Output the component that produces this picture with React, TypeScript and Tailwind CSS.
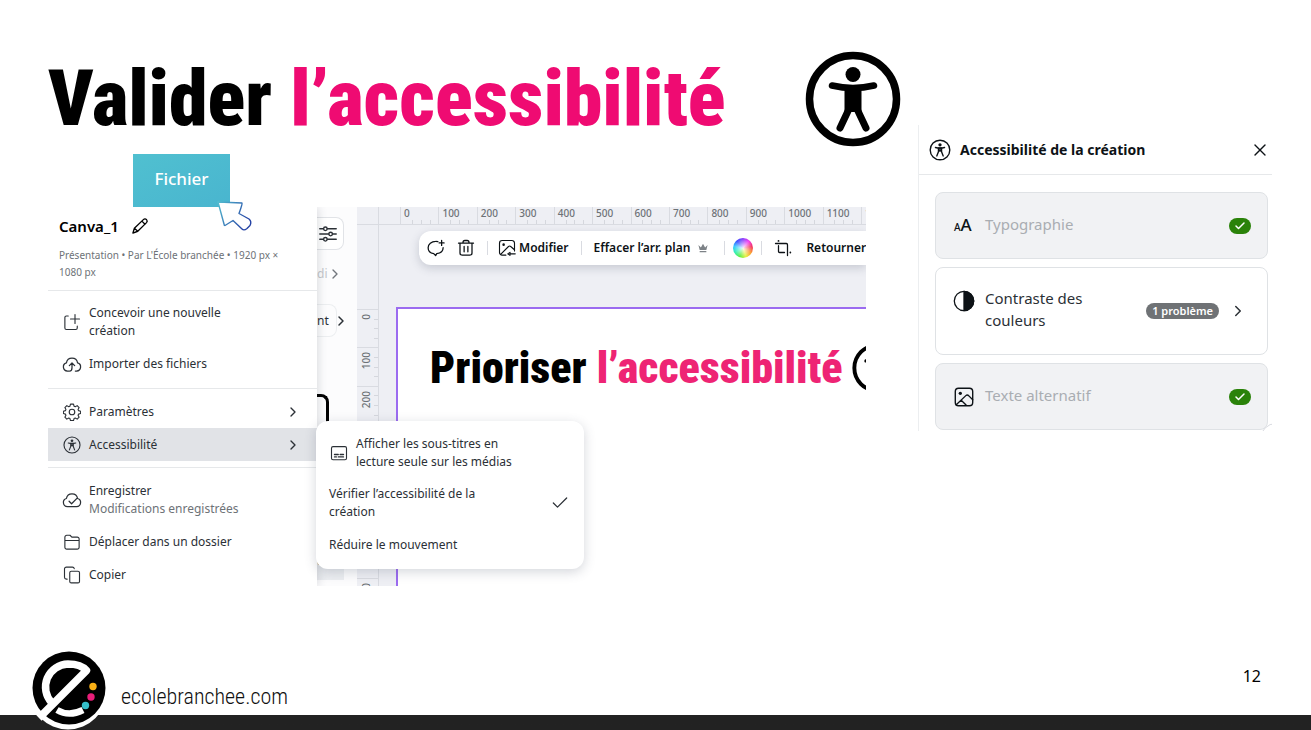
import React from 'react';
import type { ReactNode } from 'react';
import { Check, ChevronRight, X } from 'lucide-react';

interface IconProps {
  className?: string;
}

interface LineIconProps extends IconProps {
  children: ReactNode;
  strokeWidth?: number;
}

function LineIcon({ children, className = 'w-[18px] h-[18px]', strokeWidth = 1.5 }: LineIconProps) {
  return (
    <svg
      viewBox="0 0 24 24"
      className={`shrink-0 ${className}`}
      fill="none"
      stroke="currentColor"
      strokeWidth={strokeWidth}
      strokeLinecap="round"
      strokeLinejoin="round"
      aria-hidden="true"
    >
      {children}
    </svg>
  );
}

function PersonLogo({ className }: IconProps) {
  return (
    <svg viewBox="0 0 96 96" className={className} fill="none" stroke="#000" strokeLinecap="round" strokeLinejoin="round" aria-hidden="true">
      <circle cx="48" cy="48" r="43.5" strokeWidth="7.5" />
      <circle cx="48" cy="23.5" r="7.5" fill="#000" stroke="none" />
      <path d="M27 34.500q21 5 42 0" strokeWidth="6.500" />
      <path d="M39.500 36h17v25h-17z" fill="#000" stroke="none" />
      <path d="M43.500 59L35 77M52.500 59L61 77" strokeWidth="7" />
    </svg>
  );
}

function PersonIcon({ className }: IconProps) {
  return (
    <LineIcon className={className}>
      <circle cx="12" cy="12" r="10.700" strokeWidth="1.500" />
      <circle cx="12" cy="6.300" r="1.800" fill="currentColor" stroke="none" />
      <path d="M7 9.300q5 1.300 10 0" />
      <path d="M10.300 9.800h3.400v4l1.800 4.700M10.300 9.800v4l-1.800 4.700M10.500 13.500l1.500-.8 1.500.8M12 10v3" />
    </LineIcon>
  );
}

function PencilIcon() {
  return (
    <LineIcon className="w-4.5 h-4.5" strokeWidth={1.8}>
      <path d="M2.500 21.500l2-6.500L16.500 3.500c1.300-1.300 3-1.300 4.200 0s1.200 2.700 0 4L9 19zM14.500 5.500l4.200 4.200M4.500 15L9 19" />
    </LineIcon>
  );
}

function NewDesignIcon() {
  return (
    <LineIcon>
      <path d="M7 4H4.500A2 2 0 0 0 2.500 6v14a2 2 0 0 0 2 2H17a2 2 0 0 0 2-2V17.500M16 2v12M10 8h12" />
    </LineIcon>
  );
}

function CloudUploadIcon() {
  return (
    <LineIcon className="w-5 h-5">
      <path d="M8 20.500H6.500a5 5 0 0 1-1.200-9.800 6.800 6.800 0 0 1 13.400 0 5 5 0 0 1-1.200 9.800H16" />
      <path d="M9 20.500q3 0 3-4V11M8.800 14l3.200-3.200 3.200 3.200" />
    </LineIcon>
  );
}

function GearIcon() {
  return (
    <LineIcon>
      <circle cx="12" cy="12" r="3.700" />
      <path d="M10 1.500h4l.8 2.800 1.500.6 2.600-1.400 2.600 2.600-1.400 2.600.6 1.500 2.800.8v3l-2.800.8-.6 1.500 1.400 2.600-2.600 2.600-2.600-1.400-1.500.6-.8 2.800h-4l-.8-2.800-1.500-.6-2.600 1.400-2.600-2.600 1.400-2.600-.6-1.500-2.800-.8v-3l2.800-.8.6-1.500-1.400-2.600 2.600-2.600 2.600 1.400 1.500-.6z" />
    </LineIcon>
  );
}

function CloudCheckIcon() {
  return (
    <LineIcon className="w-5 h-5">
      <path d="M10 20H6.500a5 5 0 0 1-1.200-9.800 6.800 6.800 0 0 1 13.400 0A5 5 0 0 1 17.500 20H10M8.500 13.500l3 3 7-7" />
    </LineIcon>
  );
}

function FolderIcon() {
  return (
    <LineIcon>
      <path d="M2.500 10V5.500A2.500 2.500 0 0 1 5 3h4.300l2.500 2.500H19A2.500 2.500 0 0 1 21.500 8v11a2.500 2.500 0 0 1-2.500 2.500H5A2.500 2.500 0 0 1 2.500 19v-9h19" />
    </LineIcon>
  );
}

function CopyIcon() {
  return (
    <LineIcon>
      <rect x="9" y="7" width="13" height="15.500" rx="2" />
      <path d="M5.500 17.500H4.500A2.500 2.500 0 0 1 2 15V4A2.500 2.500 0 0 1 4.500 1.500h8A2.500 2.500 0 0 1 15 3.500" />
    </LineIcon>
  );
}

function SubtitleIcon() {
  return (
    <LineIcon>
      <rect x="2" y="3.500" width="20" height="17.500" rx="2" />
      <path d="M6 14h5M13.500 14H18M6 17.200h2.500M11 17.200h7" strokeWidth="1.800" />
    </LineIcon>
  );
}

function ImageIcon({ className }: IconProps) {
  return (
    <LineIcon className={className}>
      <rect x="2.500" y="2.500" width="19" height="19" rx="3.500" />
      <circle cx="8" cy="8" r="1.800" fill="currentColor" stroke="none" />
      <path d="M3.500 20.500L14 10.500q1.500-1.400 3 0l4.500 4.500M9 15.500l5.500 5.500" />
    </LineIcon>
  );
}

function EditImageIcon() {
  return (
    <LineIcon>
      <path d="M10.500 21.500H5.500a3.500 3.500 0 0 1-3.500-3.500V5.500A3.500 3.500 0 0 1 5.500 2h13A3.500 3.500 0 0 1 22 5.500V16M3.500 20.500L14 10q1.500-1.400 3 0l4.500 4" />
      <circle cx="7.500" cy="7.500" r="1.700" fill="currentColor" stroke="none" />
      <path d="M13 19.800l3-2v4zM16 19.800h7" />
    </LineIcon>
  );
}

function SlidersIcon() {
  return (
    <LineIcon className="w-4.5 h-4.5" strokeWidth={1.8}>
      <path d="M1 5h5M11 5h12M1 12h12M18 12h5M1 19h5M11 19h12" />
      <circle cx="8.500" cy="5" r="2.400" />
      <circle cx="15.500" cy="12" r="2.400" />
      <circle cx="8.500" cy="19" r="2.400" />
    </LineIcon>
  );
}

function CommentIcon() {
  return (
    <LineIcon strokeWidth={1.7}>
      <path d="M14.500 3.500a12 12 0 0 0-3-.3C6 3.200 1.500 6.800 1.500 11.500c0 4 3 7.200 7.500 8l2.500 2.700 1.500-2.700c5-.7 8.500-3.800 8.500-8M19.500 2v6.500M16.200 5.200h6.600" />
    </LineIcon>
  );
}

function TrashIcon() {
  return (
    <LineIcon strokeWidth={1.7}>
      <path d="M2 5.500h20M8 5.500V4.500a2.500 2.500 0 0 1 2.500-2.500h3A2.500 2.500 0 0 1 16 4.500v1M4 5.500v13A3 3 0 0 0 7 21.500h10a3 3 0 0 0 3-3v-13M9.500 10v7M14.500 10v7" />
    </LineIcon>
  );
}

function CrownIcon() {
  return (
    <svg viewBox="0 0 24 24" className="w-2.5 h-2.5 shrink-0" fill="#7d8287" aria-hidden="true">
      <path d="M1 5l6 6 5-9 5 9 6-6-3 12H4zM4 19h16v3H4z" />
    </svg>
  );
}

function CropIcon() {
  return (
    <LineIcon strokeWidth={1.7}>
      <path d="M2 6h14.500q1.500 0 1.500 1.500V22M6 9v7.500Q6 18 7.500 18H14" />
      <path d="M6 2.500v.1M21.800 18v.1" strokeWidth="2.400" />
    </LineIcon>
  );
}

function ContrastIcon() {
  return (
    <LineIcon className="w-6 h-6" strokeWidth={1.3}>
      <circle cx="12" cy="12" r="9.700" />
      <path d="M12 2.300a9.700 9.700 0 0 1 0 19.400z" fill="currentColor" />
    </LineIcon>
  );
}

function CursorIcon() {
  return (
    <svg viewBox="0 0 36 32" className="absolute left-[84px] top-[46px] z-20 w-9 h-8" aria-hidden="true">
      <defs>
        <linearGradient id="cursor" x1="0" x2="1" y1="0" y2=".5">
          <stop offset="0" stopColor="#54bdd0" />
          <stop offset="1" stopColor="#2543a5" />
        </linearGradient>
      </defs>
      <path
        d="M1 2L25 3Q25.500 4 22 13.500L32 19Q35 21.500 33 25.500L30 28.500Q27 31 25 29L16 20.500L8 25.500Q7 25.500 7 24Z"
        fill="#fff"
        stroke="url(#cursor)"
        strokeWidth="1.400"
        strokeLinejoin="round"
      />
    </svg>
  );
}

function BrandLogo() {
  return (
    <svg viewBox="0 0 78 80" className="w-[78px] h-20 shrink-0" aria-hidden="true">
      <circle cx="39" cy="40.500" r="39" fill="#fff" />
      <circle cx="40" cy="38" r="36.500" fill="#000" />
      <path d="M23 53A23 23 0 0 1 39 14Q52 14 57.500 20.500L10 68" fill="none" stroke="#fff" strokeWidth="7.500" strokeLinejoin="round" />
      <path d="M28 60q12 7 26 0" fill="none" stroke="#fff" strokeWidth="6.500" />
      <circle cx="64" cy="36.500" r="3.700" fill="#fbb116" />
      <circle cx="62" cy="47" r="3.700" fill="#e91e79" />
      <circle cx="56.500" cy="55.500" r="3.700" fill="#35bfc9" />
    </svg>
  );
}

interface MenuItemProps {
  icon: ReactNode;
  label: string;
  detail?: string;
  submenu?: boolean;
  active?: boolean;
}

function MenuItem({ icon, label, detail, submenu, active }: MenuItemProps) {
  return (
    <button className={`flex w-full items-center gap-[7px] pt-2 pb-[7px] pl-3.5 pr-4 text-left ${active ? 'bg-[#e1e3e7]' : ''}`}>
      <span className="flex w-5 -my-1 justify-center">{icon}</span>
      <span className="flex-1 pr-10">
        {label}
        {detail && <span className="block text-[#6d7277]">{detail}</span>}
      </span>
      {submenu && <ChevronRight className="w-4 h-4" strokeWidth={2} />}
    </button>
  );
}

function FileMenu() {
  return (
    <nav className="z-10 w-[269px] shrink-0 bg-white text-[12px] leading-[18px] text-[#2b3036] shadow-[2px_0_8px_rgba(60,70,90,0.16)]">
      <div className="px-[11px] pt-[9px]">
        <div className="flex items-center gap-3 text-black">
          <span className="text-[15px] leading-5 font-semibold">Canva_1</span>
          <PencilIcon />
        </div>
        <p className="mt-[11px] text-[10px] leading-[17px] text-[#6d7277]">
          Présentation • Par L'École branchée • 1920 px ×<br />1080 px
        </p>
      </div>
      <hr className="mt-[9px] mb-[5px] border-[#e6e8ea]" />
      <MenuItem icon={<NewDesignIcon />} label="Concevoir une nouvelle création" />
      <MenuItem icon={<CloudUploadIcon />} label="Importer des fichiers" />
      <hr className="mt-2 mb-1.5 border-[#e6e8ea]" />
      <MenuItem icon={<GearIcon />} label="Paramètres" submenu />
      <MenuItem icon={<PersonIcon className="w-[18px] h-[18px]" />} label="Accessibilité" submenu active />
      <hr className="my-1.5 border-[#e6e8ea]" />
      <MenuItem icon={<CloudCheckIcon />} label="Enregistrer" detail="Modifications enregistrées" />
      <MenuItem icon={<FolderIcon />} label="Déplacer dans un dossier" />
      <MenuItem icon={<CopyIcon />} label="Copier" />
    </nav>
  );
}

function Submenu() {
  return (
    <div className="absolute left-[268px] top-[214px] z-20 w-[268px] rounded-xl bg-white pt-1.5 pb-[7px] text-[12px] leading-[18px] text-[#2b3036] shadow-[0_3px_12px_rgba(60,70,90,0.22)]">
      <button className="flex w-full items-center gap-2 pt-2 pb-[7px] pl-3.5 pr-14 text-left">
        <SubtitleIcon />
        <span>Afficher les sous-titres en lecture seule sur les médias</span>
      </button>
      <button className="flex w-full items-center justify-between py-[7px] pl-[13px] pr-3.5 text-left">
        <span className="w-[165px]">Vérifier l’accessibilité de la création</span>
        <Check className="w-5 h-5" strokeWidth={1.5} />
      </button>
      <button className="flex w-full py-2 pl-[13px] text-left">Réduire le mouvement</button>
    </div>
  );
}

function SideStrip() {
  return (
    <div className="flex w-10 shrink-0 flex-col items-start overflow-hidden bg-[#fcfcfd] text-[12px] leading-[18px] text-[#2b3036]">
      <button className="mt-2.5 flex h-[33px] w-[27px] items-center justify-center rounded-r-lg border border-l-0 border-[#e1e3e7] bg-white pr-1" aria-label="Filtres">
        <SlidersIcon />
      </button>
      <div className="mt-3.5 flex h-5 items-center text-[#c4c7cb]">
        <span>di</span>
        <ChevronRight className="w-4 h-4 text-[#71767c]" />
      </div>
      <div className="mt-5 flex items-center">
        <span className="flex h-[33px] w-5 items-center rounded-r-lg border border-l-0 border-[#eceef0]">nt</span>
        <ChevronRight className="-ml-1 w-4 h-4" strokeWidth={2.2} />
      </div>
      <div className="mt-[57px] h-16 w-3 rounded-tr-lg border-t-3 border-r-3 border-black" />
      <div className="mt-[90px] h-8 w-[27px] bg-[#eceef1] pt-1">ut</div>
    </div>
  );
}

const RULER_TOP = ['0', '100', '200', '300', '400', '500', '600', '700', '800', '900', '1000', '1100'];
const RULER_LEFT = ['0', '100', '200', '300', '400', '500', '600'];

function Ruler() {
  return (
    <div className="flex h-[18px] border-b border-[#d9dbe1] text-[10px] leading-3 font-medium text-[#6d7277]">
      <div className="w-[21px] shrink-0" />
      {RULER_TOP.map(value => (
        <div key={value} className="flex flex-1 flex-col justify-between border-l border-[#d9dbe1] pl-[3px]">
          <span>{value}</span>
          <div className="flex h-1 justify-evenly">
            <i className="w-px bg-[#d5d7dd]" />
            <i className="w-px bg-[#d5d7dd]" />
            <i className="w-px bg-[#d5d7dd]" />
          </div>
        </div>
      ))}
      <div className="w-[5px] shrink-0 overflow-hidden border-l border-[#d9dbe1] pl-[3px]">1</div>
    </div>
  );
}

function SideRuler() {
  return (
    <div className="flex w-[22px] shrink-0 flex-col overflow-hidden border-r border-[#d9dbe1] bg-[#eeeff4] text-[10px] leading-3 font-medium text-[#6d7277]">
      <div className="h-[18px] shrink-0 border-b border-[#d9dbe1]" />
      <div className="h-[84px] shrink-0" />
      <div className="grid h-[269px] shrink-0 grid-rows-7">
        {RULER_LEFT.map(value => (
          <div key={value} className="flex justify-between border-t border-[#d9dbe1] pl-[3px]">
            <span className="h-fit rotate-180 pb-1 [writing-mode:vertical-rl]">{value}</span>
            <div className="flex w-1 flex-col justify-evenly">
              <i className="h-px bg-[#d5d7dd]" />
              <i className="h-px bg-[#d5d7dd]" />
              <i className="h-px bg-[#d5d7dd]" />
            </div>
          </div>
        ))}
      </div>
      <div className="flex border-t border-[#d9dbe1] pl-[3px]">
        <span className="rotate-180 pb-1 [writing-mode:vertical-rl]">0</span>
      </div>
    </div>
  );
}

function Separator() {
  return <span className="h-3.5 w-px shrink-0 bg-[#d9dbe1]" />;
}

function Toolbar() {
  return (
    <div className="ml-10 mt-1.5 flex h-[34px] shrink-0 items-center overflow-hidden whitespace-nowrap rounded-l-xl bg-white pl-2 text-[12px] font-semibold text-[#0d1216] shadow-[0_3px_10px_rgba(60,70,90,0.22)]">
      <button aria-label="Commenter"><CommentIcon /></button>
      <button className="mx-3" aria-label="Supprimer"><TrashIcon /></button>
      <Separator />
      <button className="mr-3 ml-2.5 flex items-center gap-[3px]"><EditImageIcon />Modifier</button>
      <Separator />
      <button className="mr-4 ml-3 flex items-center gap-2">Effacer l’arr. plan <CrownIcon /></button>
      <Separator />
      <button
        className="mx-2 h-5 w-5 shrink-0 rounded-full bg-[radial-gradient(circle,rgba(255,255,255,0.9),transparent_65%),conic-gradient(#8a3ffc,#f03df0,#f43060,#fa9a30,#e8f040,#60ee40,#30f0b0,#30c8ff,#3b4dff,#8a3ffc)]"
        aria-label="Couleur"
      />
      <Separator />
      <button className="ml-3 mr-3.5" aria-label="Rogner"><CropIcon /></button>
      <button>Retourner</button>
    </div>
  );
}

function Editor() {
  return (
    <div className="relative mr-[52px] flex h-[379px]">
      <div className="flex min-w-0 flex-1 overflow-hidden">
        <FileMenu />
        <SideStrip />
        <SideRuler />
        <div className="flex min-w-0 flex-1 flex-col bg-[#eeeff4]">
          <Ruler />
          <Toolbar />
          <div className="ml-[17px] mt-[42px] flex flex-1 items-start overflow-hidden whitespace-nowrap border-l-2 border-t-2 border-[#9b6bf0] bg-white pl-8 pt-[34px]">
            <p className="font-['Roboto_Condensed',sans-serif] text-[44px] leading-[50px] font-black text-black">
              Prioriser <span className="text-[#ee2474]">l’accessibilité</span>
            </p>
            <PersonLogo className="ml-2.5 h-[50px] w-[50px] shrink-0" />
          </div>
        </div>
      </div>
      <Submenu />
    </div>
  );
}

function PassedBadge() {
  return (
    <span className="flex h-4 w-[22px] items-center justify-center rounded-full bg-[#2a8209] text-white">
      <Check className="w-3 h-3" strokeWidth={3} />
    </span>
  );
}

function AccessibilityPanel() {
  return (
    <aside className="relative mt-[125px] h-[306px] w-[354px] shrink-0 overflow-hidden border-l border-[#eceef0] text-[15px] leading-[22px] text-[#2b3036]">
      <header className="flex h-[50px] items-center border-b border-[#e6e8ea] pl-2.5 pr-0.5 text-[#0d1216]">
        <PersonIcon className="w-[22px] h-[22px]" />
        <h2 className="ml-[9px] flex-1 text-[14px] font-bold">Accessibilité de la création</h2>
        <button aria-label="Fermer"><X className="w-5 h-5" strokeWidth={1.6} /></button>
      </header>
      <div className="space-y-2 pl-4 pr-1 pt-[17px]">
        <button className="flex h-[67px] w-full items-center rounded-lg border border-[#dfe2e5] bg-[#f1f2f4] pl-[18px] pr-4 text-left">
          <span className="flex w-[31px] items-baseline font-medium text-[#0d1216]" aria-hidden="true">
            <span className="text-[10px]">A</span>
            <span className="text-[17px]">A</span>
          </span>
          <span className="flex-1 pb-1 text-[#a9adb2]">Typographie</span>
          <PassedBadge />
        </button>
        <button className="flex h-[88px] w-full items-center rounded-lg border border-[#dfe2e5] bg-white pl-4 pr-5 text-left">
          <span className="-mt-5 w-[33px] text-[#0d1216]"><ContrastIcon /></span>
          <span className="w-[120px] pb-1">Contraste des couleurs</span>
          <span className="ml-auto rounded-full bg-[#6f7275] px-1.5 text-[11px] leading-4 font-semibold text-white">1 problème</span>
          <ChevronRight className="ml-2.5 w-[18px] h-[18px]" />
        </button>
        <button className="flex h-[67px] w-full items-center rounded-lg border border-[#dfe2e5] bg-[#f1f2f4] pl-[17px] pr-4 text-left">
          <span className="w-8 text-[#0d1216]"><ImageIcon className="w-[22px] h-[22px]" /></span>
          <span className="flex-1 pb-1 text-[#a9adb2]">Texte alternatif</span>
          <PassedBadge />
        </button>
      </div>
      <span className="absolute -bottom-6 -right-5 h-8 w-8 rounded-full border border-[#d9dbe1] bg-white" />
    </aside>
  );
}

export default function App() {
  return (
    <div className="flex min-h-screen flex-col overflow-hidden bg-white font-['Noto_Sans',sans-serif]">
      <main className="flex flex-1 pl-12 pr-[39px]">
        <div className="min-w-0 flex-1">
          <div className="flex justify-between pr-[17px] pt-[51px]">
            <h1 className="whitespace-nowrap pt-0.5 font-['Roboto_Condensed',sans-serif] text-[78px] leading-[92px] font-black text-black">
              Valider <span className="text-[#ef0b72]">l’accessibilité</span>
            </h1>
            <PersonLogo className="h-24 w-24 shrink-0" />
          </div>
          <div className="relative ml-[85px] mt-[7px] w-[97px]">
            <button className="block h-[53px] w-full bg-linear-to-br from-[#50c0d0] to-[#49b5cf] pb-1 text-[17px] font-medium text-white">Fichier</button>
            <CursorIcon />
          </div>
          <Editor />
        </div>
        <AccessibilityPanel />
      </main>
      <footer className="flex h-20 items-start bg-linear-to-b from-white from-[65px] to-[#222] to-[65px] pl-[29px] pr-[50px]">
        <BrandLogo />
        <a href="#" className="ml-3.5 mt-[33px] font-['Roboto_Condensed',sans-serif] text-[22px] leading-7 font-light text-[#111]">ecolebranchee.com</a>
        <span className="ml-auto mt-3.5 text-[16px] leading-6 text-black">12</span>
      </footer>
    </div>
  );
}
